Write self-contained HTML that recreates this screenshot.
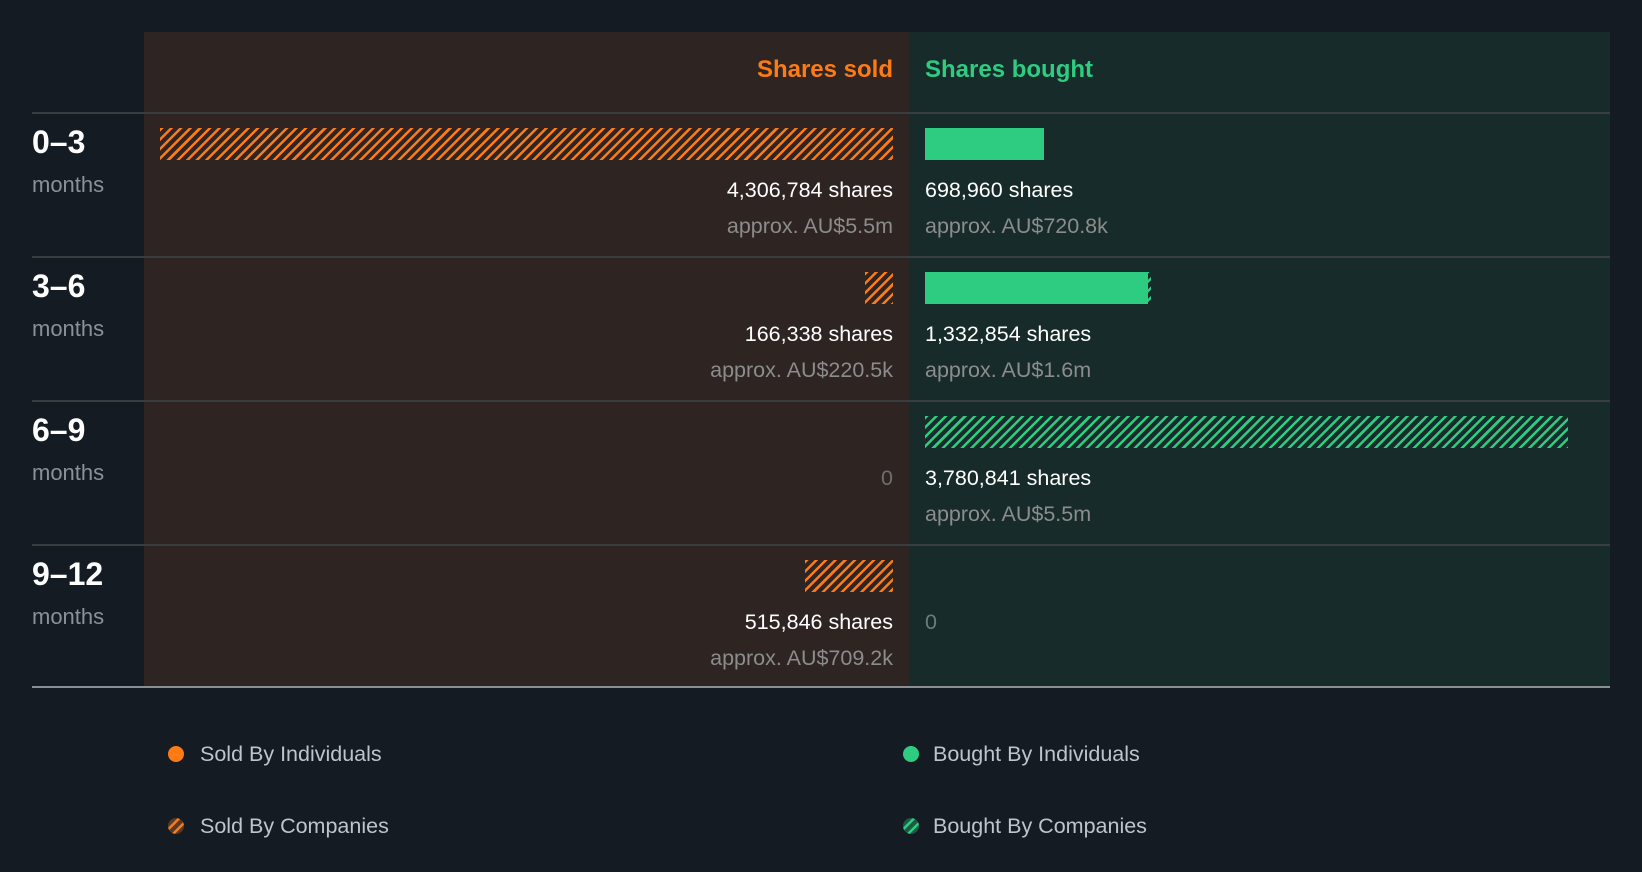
<!DOCTYPE html>
<html><head><meta charset="utf-8"><style>
*{margin:0;padding:0;box-sizing:border-box}
body{width:1642px;height:872px;background:#141b23;font-family:"Liberation Sans",sans-serif;position:relative;overflow:hidden}
.a{position:absolute}
.lp{left:144px;top:32px;width:765px;height:655px;background:#2e2422}
.rp{left:909px;top:32px;width:701px;height:655px;background:#172b2a}
.hl{left:32px;width:1578px;height:2px;background:#3a3d40}
.rl{left:32px;font-size:32px;font-weight:bold;color:#fff;line-height:30px}
.mo{left:32px;font-size:22px;color:#8c9196;line-height:24px}
.sh{font-size:21.5px;color:#fff;line-height:24px;white-space:nowrap}
.ap{font-size:21.5px;color:#8c8c8c;line-height:24px;white-space:nowrap}
.r{right:749px;text-align:right}
.g{left:925px}
.ho{background:repeating-linear-gradient(135deg,#fd7b14 0 2.5px,transparent 2.5px 6.8px)}
.hg{background:repeating-linear-gradient(135deg,#2ecc80 0 2.5px,transparent 2.5px 6.8px)}
.lg{font-size:21.5px;color:#c0c4c8;line-height:24px}
.dot{width:16px;height:16px;border-radius:50%}
</style></head><body>
<div class="a lp"></div><div class="a rp"></div>
<div class="a" style="right:749px;top:56px;font-size:24px;font-weight:bold;color:#fd7b14;line-height:28px">Shares sold</div>
<div class="a" style="left:925px;top:56px;font-size:24px;font-weight:bold;color:#2ecc80;line-height:28px">Shares bought</div>
<div class="a hl" style="top:112px"></div>
<div class="a hl" style="top:256px"></div>
<div class="a hl" style="top:400px"></div>
<div class="a hl" style="top:544px"></div>
<div class="a" style="left:32px;top:686px;width:1578px;height:2px;background:#8a8f94"></div>

<div class="a rl" style="top:127px">0–3</div>
<div class="a mo" style="top:173px">months</div>
<div class="a ho" style="left:160px;top:128px;width:733px;height:32px"></div>
<div class="a" style="left:925px;top:128px;width:119px;height:32px;background:#2ecc80"></div>
<div class="a sh r" style="top:178px">4,306,784 shares</div>
<div class="a ap r" style="top:214px">approx. AU$5.5m</div>
<div class="a sh g" style="top:178px">698,960 shares</div>
<div class="a ap g" style="top:214px">approx. AU$720.8k</div>

<div class="a rl" style="top:271px">3–6</div>
<div class="a mo" style="top:317px">months</div>
<div class="a ho" style="left:865px;top:272px;width:28px;height:32px"></div>
<div class="a" style="left:925px;top:272px;width:223px;height:32px;background:#2ecc80"></div>
<div class="a hg" style="left:1146px;top:272px;width:5px;height:32px"></div>
<div class="a sh r" style="top:322px">166,338 shares</div>
<div class="a ap r" style="top:358px">approx. AU$220.5k</div>
<div class="a sh g" style="top:322px">1,332,854 shares</div>
<div class="a ap g" style="top:358px">approx. AU$1.6m</div>

<div class="a rl" style="top:415px">6–9</div>
<div class="a mo" style="top:461px">months</div>
<div class="a ap r" style="top:466px;color:#6e6e6e">0</div>
<div class="a hg" style="left:925px;top:416px;width:643px;height:32px"></div>
<div class="a sh g" style="top:466px">3,780,841 shares</div>
<div class="a ap g" style="top:502px">approx. AU$5.5m</div>

<div class="a rl" style="top:559px">9–12</div>
<div class="a mo" style="top:605px">months</div>
<div class="a ho" style="left:805px;top:560px;width:88px;height:32px"></div>
<div class="a sh r" style="top:610px">515,846 shares</div>
<div class="a ap r" style="top:646px">approx. AU$709.2k</div>
<div class="a ap g" style="top:610px;color:#6e7a78">0</div>

<div class="a dot" style="left:168px;top:746px;background:#fd7b14"></div>
<div class="a lg" style="left:200px;top:742px">Sold By Individuals</div>
<div class="a dot" style="left:903px;top:746px;background:#2ecc80"></div>
<div class="a lg" style="left:933px;top:742px">Bought By Individuals</div>
<div class="a dot ho" style="left:168px;top:818px;background-color:#5a3a26"></div>
<div class="a lg" style="left:200px;top:814px">Sold By Companies</div>
<div class="a dot hg" style="left:903px;top:818px;background-color:#1f5a44"></div>
<div class="a lg" style="left:933px;top:814px">Bought By Companies</div>
</body></html>
